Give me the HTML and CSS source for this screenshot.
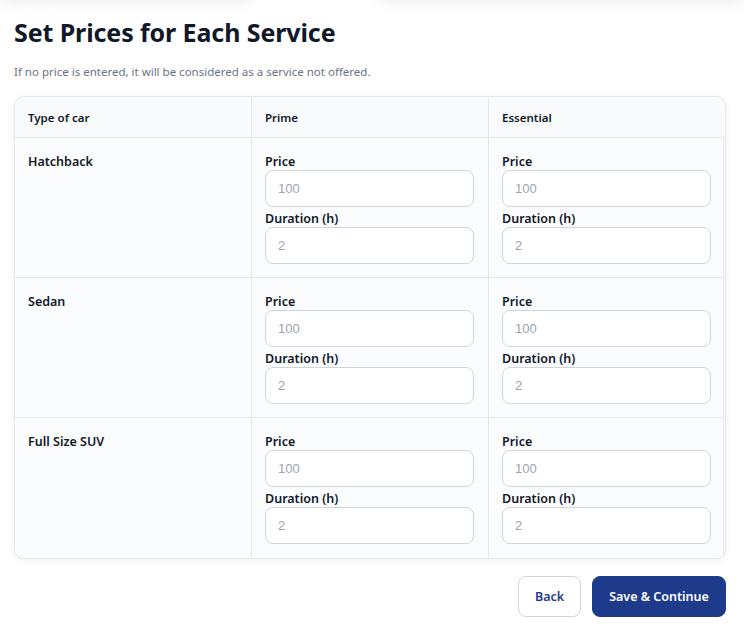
FILE: index.html
```html
<!DOCTYPE html>
<html lang="en">
<head>
<meta charset="utf-8">
<title>Set Prices</title>
<link rel="stylesheet" href="styles.css">
</head>
<body>
<div class="topbar"><div class="tb-left"></div><div class="tb-right"></div></div>
<main class="page">
  <h1 class="title">Set Prices for Each Service</h1>
  <p class="subtitle">If no price is entered, it will be considered as a service not offered.</p>
  <div class="card">
    <div class="grid">
      <div class="hcell">Type of car</div>
      <div class="hcell">Prime</div>
      <div class="hcell last">Essential</div>

      <div class="cell name">Hatchback</div>
      <div class="cell">
        <label class="lbl">Price</label><input class="inp" placeholder="100">
        <label class="lbl">Duration (h)</label><input class="inp" placeholder="2">
      </div>
      <div class="cell last">
        <label class="lbl">Price</label><input class="inp" placeholder="100">
        <label class="lbl">Duration (h)</label><input class="inp" placeholder="2">
      </div>

      <div class="cell name">Sedan</div>
      <div class="cell">
        <label class="lbl">Price</label><input class="inp" placeholder="100">
        <label class="lbl">Duration (h)</label><input class="inp" placeholder="2">
      </div>
      <div class="cell last">
        <label class="lbl">Price</label><input class="inp" placeholder="100">
        <label class="lbl">Duration (h)</label><input class="inp" placeholder="2">
      </div>

      <div class="cell name bottom">Full Size SUV</div>
      <div class="cell bottom">
        <label class="lbl">Price</label><input class="inp" placeholder="100">
        <label class="lbl">Duration (h)</label><input class="inp" placeholder="2">
      </div>
      <div class="cell last bottom">
        <label class="lbl">Price</label><input class="inp" placeholder="100">
        <label class="lbl">Duration (h)</label><input class="inp" placeholder="2">
      </div>
    </div>
  </div>
  <div class="actions">
    <button class="btn back">Back</button>
    <button class="btn primary">Save &amp; Continue</button>
  </div>
</main>
</body>
</html>
```

FILE: styles.css
```css
* { box-sizing: border-box; }
html, body { margin: 0; padding: 0; background: #ffffff; }
body {
  font-family: "Noto Sans", "Open Sans", sans-serif;
  color: #111827;
  overflow: hidden;
}
.topbar {
  position: absolute;
  top: -20px;
  left: 0;
  right: 0;
  height: 20px;
  display: flex;
  gap: 130px;
}
.tb-left, .tb-right {
  height: 20px;
  background: #fff;
  box-shadow: 0 2px 14px rgba(0,0,0,0.08);
}
.tb-left { width: 250px; }
.tb-right { flex: 1; }
.page {
  padding: 16px 18px 0 14px;
}
.title {
  margin: 0;
  font-size: 25px;
  font-weight: 700;
  line-height: 32px;
  color: #111827;
  letter-spacing: -0.1px;
}
.subtitle {
  margin: 16px 0 0;
  font-size: 11.5px;
  line-height: 16px;
  color: #6b7280;
}
.card {
  margin-top: 16px;
  border: 1px solid #e5e7eb;
  border-radius: 10px;
  background: #fbfcfe;
  box-shadow: 0 2px 8px rgba(17,24,39,0.06);
  overflow: hidden;
}
.grid {
  display: grid;
  grid-template-columns: 237px 237px 235px;
}
.hcell {
  height: 41px;
  display: flex;
  align-items: center;
  padding: 0 13px;
  background: #f9fafb;
  font-size: 11.5px;
  font-weight: 600;
  color: #111827;
  border-bottom: 1px solid #e5e7eb;
  border-right: 1px solid #e5e7eb;
}
.hcell.last { border-right: none; }
.cell {
  padding: 15px 13px 13px;
  border-bottom: 1px solid #e5e7eb;
  border-right: 1px solid #e5e7eb;
  background: #fbfcfe;
}
.cell.last { border-right: 1px solid #e5e7eb; }
.cell.bottom { border-bottom: none; padding-bottom: 14px; }
.cell.name {
  font-size: 12.5px;
  font-weight: 600;
  line-height: 17px;
  padding-left: 13px;
}
.lbl {
  display: block;
  font-size: 12.5px;
  font-weight: 600;
  line-height: 17px;
  color: #111827;
}
.inp {
  display: block;
  width: 209px;
  height: 37px;
  margin: 0 0 3px;
  padding: 0 12px;
  border: 1px solid #d1d5db;
  border-radius: 8px;
  background: #ffffff;
  font-family: "Liberation Sans", Arial, sans-serif;
  font-size: 13px;
  color: #111827;
  outline: none;
}
.inp:last-child { margin-bottom: 0; }
.inp::placeholder { color: #9ca3af; }
.actions {
  display: flex;
  justify-content: flex-end;
  gap: 11px;
  margin-top: 17px;
}
.btn {
  height: 41px;
  border-radius: 8px;
  font-family: "Noto Sans", "Open Sans", sans-serif;
  font-size: 12.5px;
  font-weight: 600;
  cursor: pointer;
}
.btn.back {
  width: 63px;
  padding: 0;
  background: #ffffff;
  border: 1px solid #d1d5db;
  color: #1e3a8a;
}
.btn.primary {
  width: 134px;
  padding: 0;
  background: #1e3a8a;
  border: 1px solid #1e3a8a;
  color: #ffffff;
}
```
